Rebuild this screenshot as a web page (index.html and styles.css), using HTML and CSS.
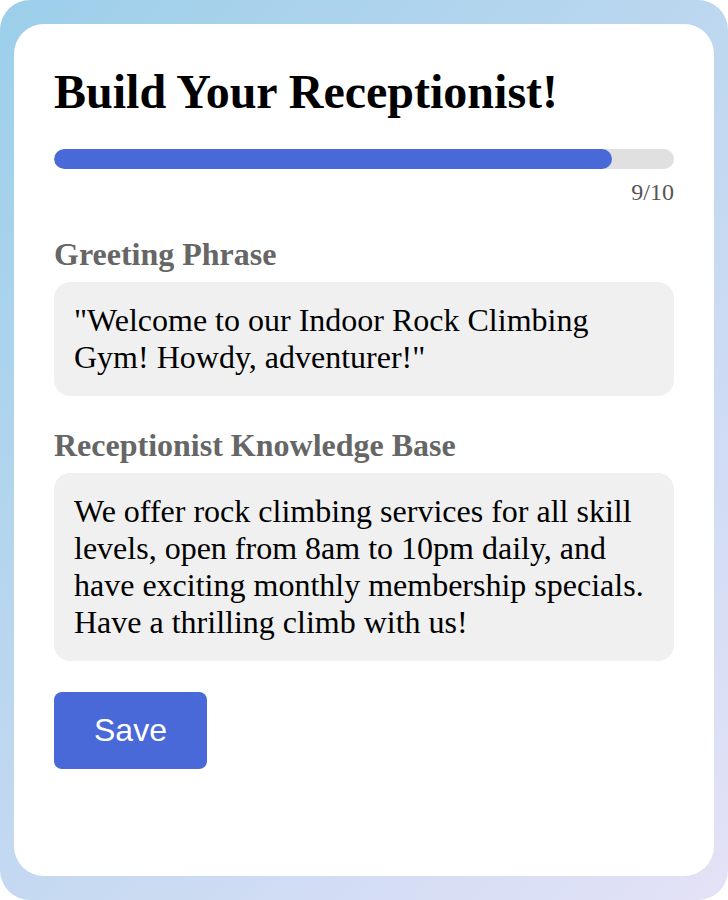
FILE: index.html
```html
<!DOCTYPE html>
<html lang="en">
<head>
    <meta charset="UTF-8">
    <meta name="viewport" content="width=device-width, initial-scale=1.0">
    <title>Build Your Receptionist</title>
    <link rel="stylesheet" href="styles.css">
</head>
<body>
    <div class="frame">
        <div class="card">
            <h1 class="title">Build Your Receptionist!</h1>

            <div class="progress">
                <div class="progress-fill" style="width: 90%"></div>
            </div>
            <div class="progress-label">9/10</div>

            <div class="field">
                <div class="field-label">Greeting Phrase</div>
                <div class="field-box">"Welcome to our Indoor Rock Climbing Gym! Howdy, adventurer!"</div>
            </div>

            <div class="field">
                <div class="field-label">Receptionist Knowledge Base</div>
                <div class="field-box">We offer rock climbing services for all skill levels, open from 8am to 10pm daily, and have exciting monthly membership specials. Have a thrilling climb with us!</div>
            </div>

            <button class="save-btn">Save</button>
        </div>
    </div>
</body>
</html>
```

FILE: styles.css
```css
/* Base styling */
body {
    margin: 0;
    background-color: #ffffff;
    font-family: "Liberation Serif", "Times New Roman", serif;
    color: #000000;
}

.frame {
    height: 900px;
    box-sizing: border-box;
    padding: 24px 14px;
    border-radius: 30px;
    background: linear-gradient(135deg, #9ccfea 0%, #c0d8f0 50%, #e4e2f7 100%);
}

.card {
    height: 100%;
    box-sizing: border-box;
    padding: 40px;
    background-color: #ffffff;
    border-radius: 30px;
}

.title {
    font-size: 48px;
    font-weight: bold;
    margin: 0 0 30px;
}

/* Progress */
.progress {
    height: 20px;
    background-color: #e0e0e0;
    border-radius: 10px;
    overflow: hidden;
}

.progress-fill {
    height: 100%;
    background-color: #4a69d9;
    border-radius: 10px;
}

.progress-label {
    text-align: right;
    font-size: 24px;
    color: #555555;
    margin-top: 10px;
    margin-bottom: 30px;
}

/* Fields */
.field {
    margin-bottom: 31px;
}

.field-label {
    font-size: 32px;
    font-weight: bold;
    color: #666666;
    margin-bottom: 9px;
}

.field-box {
    background-color: #f0f0f0;
    border-radius: 16px;
    padding: 20px;
    font-size: 32px;
}

.save-btn {
    background-color: #4a69d9;
    color: #ffffff;
    font-family: "Liberation Sans", Arial, sans-serif;
    font-size: 32px;
    padding: 20px 40px;
    border: none;
    border-radius: 8px;
    cursor: pointer;
}
```
